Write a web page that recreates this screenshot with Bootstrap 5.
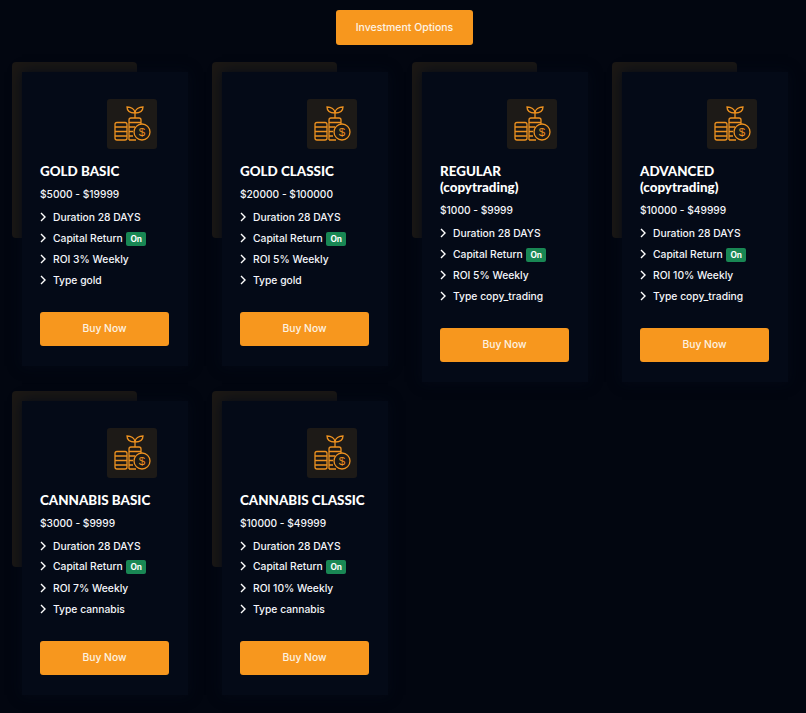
<!DOCTYPE html>
<html lang="en">
<head>
    <meta charset="UTF-8">
    <meta name="viewport" content="width=device-width, initial-scale=1.0">
    <title>Investment Options</title>
    <link href="https://cdn.jsdelivr.net/npm/bootstrap@5.3.3/dist/css/bootstrap.min.css" rel="stylesheet">
    <style>
        body { background: #020610; font-family: "Inter", "Liberation Sans", sans-serif; color: #f4f6fa; font-size: 10.3px; font-weight: 500; overflow: hidden; }
        .plans-wrap { width: 800px; }
        .btn-plan { background: #f7971e; color: #fdf3e4; border: 0; border-radius: 3px; font-size: 10.3px; font-weight: 500; }
        .btn-plan:hover { background: #f7971e; color: #fff; }
        .btn-options { width: 137px; height: 35px; margin: 10px 0 27px 336px; display: block; font-size: 10.5px; }
        .plan-col { padding: 0 12px; margin-bottom: 19px; }
        .plan-box { position: relative; margin-left: 10px; background: #040a17; padding: 27px 19px 20px 18px; box-shadow: 0 0 12px #040a17; }
        .plan-box::before { content: ""; position: absolute; left: -10px; top: -10px; width: 125px; height: 176px; background: #1b1815; border-radius: 4px; z-index: -1; }
        .plan-icon { width: 50px; height: 50px; margin-left: 67px; background: #1d1a17; border-radius: 3px; display: block; }
        .plan-title { font-family: "Lato", "Liberation Sans", sans-serif; font-weight: 900; font-size: 13.4px; line-height: 16px; color: #fff; margin: 14px 0 7px; }
        .plan-price { line-height: 17px; margin-bottom: 4px; font-size: 10.2px; }
        .plan-list { line-height: 20.6px; margin-bottom: 21.4px; }
        .plan-list svg { margin-right: 7px; vertical-align: -1px; }
        .on-badge { background: #198754; color: #fff; font-size: 8.3px; font-weight: 700; padding: 2px 4px; border-radius: 2px; margin-left: 1px; }
        .btn-buy { height: 34px; }
    </style>
</head>
<body>
    <button class="btn btn-plan btn-options">Investment Options</button>

    <div class="row g-0 plans-wrap" id="planList"></div>

    <script src="https://cdn.jsdelivr.net/npm/bootstrap@5.3.3/dist/js/bootstrap.bundle.min.js"></script>
    <script>
        const plans = [
            { name: "GOLD BASIC", price: "$5000 - $19999", roi: "3%", type: "gold" },
            { name: "GOLD CLASSIC", price: "$20000 - $100000", roi: "5%", type: "gold" },
            { name: "REGULAR (copytrading)", price: "$1000 - $9999", roi: "5%", type: "copy_trading" },
            { name: "ADVANCED (copytrading)", price: "$10000 - $49999", roi: "10%", type: "copy_trading" },
            { name: "CANNABIS BASIC", price: "$3000 - $9999", roi: "7%", type: "cannabis" },
            { name: "CANNABIS CLASSIC", price: "$10000 - $49999", roi: "10%", type: "cannabis" }
        ];

        const chev = `<svg width="6" height="10" viewBox="0 0 6 10"><path d="M1 1l4 4-4 4" fill="none" stroke="#fff" stroke-width="1.4"/></svg>`;

        const coins = `<svg class="plan-icon" viewBox="0 0 50 50">
            <g fill="none" stroke="#ec9120" stroke-width="1.3">
                <rect x="8" y="23.5" width="12" height="17.5" rx="2"/>
                <path d="M8 28h12M8 32.5h12M8 37h12"/>
                <path d="M22 41V21a2 2 0 0 1 2-2h8a2 2 0 0 1 2 2v4M22 23.500h12M22 28h6M22 32.500h4M22 37h4M22 41h7"/>
                <circle cx="35" cy="33" r="8"/>
                <path d="M28 19v-7M28 14c0-4-4-6-8-6 0 4 3 6 8 6zM28 14c0-4 4-6 8-6 0 4-3 6-8 6z"/>
            </g>
            <text x="35" y="37" text-anchor="middle" font-size="11.5" fill="#ec9120" font-family="Liberation Sans">$</text>
        </svg>`;

        // Build the plan cards
        const planList = document.getElementById("planList");
        plans.forEach(plan => {
            const col = document.createElement("div");
            col.className = "col-3 plan-col";
            col.innerHTML = `
                <div class="plan-box">
                    ${coins}
                    <div class="plan-title">${plan.name}</div>
                    <div class="plan-price">${plan.price}</div>
                    <div class="plan-list">
                        <div>${chev}Duration 28 DAYS</div>
                        <div>${chev}Capital Return <span class="on-badge">On</span></div>
                        <div>${chev}ROI ${plan.roi} Weekly</div>
                        <div>${chev}Type ${plan.type}</div>
                    </div>
                    <button class="btn btn-plan btn-buy w-100">Buy Now</button>
                </div>
            `;
            planList.appendChild(col);
        });
    </script>
</body>
</html>
